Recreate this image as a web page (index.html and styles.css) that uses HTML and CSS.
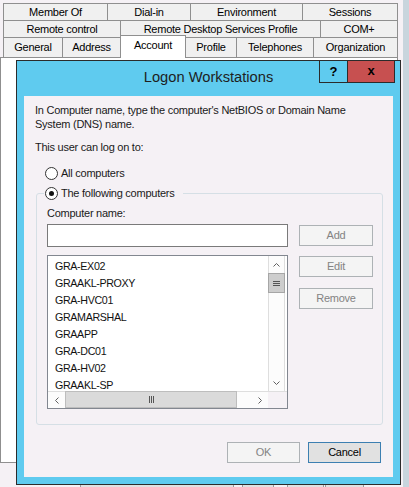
FILE: index.html
```html
<!DOCTYPE html>
<html>
<head>
<meta charset="utf-8">
<link rel="stylesheet" href="styles.css">
</head>
<body>
<div class="desk">
  <div class="parent">
    <div class="tabs">
      <div class="row">
        <span class="tab w105">Member Of</span>
        <span class="tab w84">Dial-in</span>
        <span class="tab w113">Environment</span>
        <span class="tab w96">Sessions</span>
      </div>
      <div class="row">
        <span class="tab w118">Remote control</span>
        <span class="tab w201">Remote Desktop Services Profile</span>
        <span class="tab w78">COM+</span>
      </div>
      <div class="row r3">
        <span class="tab w60">General</span>
        <span class="tab w59">Address</span>
        <span class="tab w66 sel">Account</span>
        <span class="tab w52">Profile</span>
        <span class="tab w78">Telephones</span>
        <span class="tab w85">Organization</span>
      </div>
    </div>
    <div class="panel"></div>
    <div class="pbtns">
      <span class="pb pb1"></span>
      <span class="pb pb2"></span>
      <span class="pb pb3"></span>
      <span class="pb pb4"></span>
    </div>
  </div>

  <div class="dialog">
    <div class="titlebar">
      <span class="title">Logon Workstations</span>
      <span class="tb help">?</span>
      <span class="tb close">x</span>
    </div>
    <div class="client">
      <p class="intro">In Computer name, type the computer's NetBIOS or Domain Name<br>System (DNS) name.</p>
      <p class="lead">This user can log on to:</p>
      <div class="radio first"><span class="rb"></span>All computers</div>
      <fieldset class="group">
        <legend class="radio leg"><span class="rb on"></span>The following computers</legend>
        <div class="lbl">Computer name:</div>
        <div class="grid">
          <div class="input"></div>
          <button class="btn dis add">Add</button>
          <div class="list">
            <div class="items">
              <div>GRA-EX02</div>
              <div>GRAAKL-PROXY</div>
              <div>GRA-HVC01</div>
              <div>GRAMARSHAL</div>
              <div>GRAAPP</div>
              <div>GRA-DC01</div>
              <div>GRA-HV02</div>
              <div>GRAAKL-SP</div>
            </div>
            <div class="vsb">
              <span class="arr va"><svg width="7" height="4" viewBox="0 0 7 4"><polyline points="0.5,3.5 3.5,0.5 6.5,3.5" fill="none" stroke="#606060" stroke-width="1"/></svg></span>
              <span class="vthumb"><svg width="7" height="5" viewBox="0 0 7 5"><path d="M0 0.5H7M0 2.5H7M0 4.5H7" stroke="#555" stroke-width="1"/></svg></span>
              <span class="vtrack"></span>
              <span class="arr va"><svg width="7" height="4" viewBox="0 0 7 4"><polyline points="0.5,0.5 3.5,3.5 6.5,0.5" fill="none" stroke="#606060" stroke-width="1"/></svg></span>
            </div>
            <div class="hsb">
              <span class="arr ha"><svg width="4" height="7" viewBox="0 0 4 7"><polyline points="3.5,0.5 0.5,3.5 3.5,6.5" fill="none" stroke="#606060" stroke-width="1"/></svg></span>
              <span class="hthumb"><svg width="5" height="7" viewBox="0 0 5 7"><path d="M0.5 0V7M2.5 0V7M4.5 0V7" stroke="#555" stroke-width="1"/></svg></span>
              <span class="htrack"></span>
              <span class="arr ha"><svg width="4" height="7" viewBox="0 0 4 7"><polyline points="0.5,0.5 3.5,3.5 0.5,6.5" fill="none" stroke="#606060" stroke-width="1"/></svg></span>
            </div>
            <div class="corner"></div>
          </div>
          <div class="side">
            <button class="btn dis edit">Edit</button>
            <button class="btn dis remove">Remove</button>
          </div>
        </div>
      </fieldset>
      <div class="footer">
        <button class="btn dis ok">OK</button>
        <button class="btn cancel">Cancel</button>
      </div>
    </div>
  </div>
</div>
</body>
</html>
```
FILE: styles.css
```css
html, body {
  margin: 0;
  padding: 0;
}
body {
  width: 409px;
  height: 487px;
  overflow: hidden;
  background: #c8d5dd;
  font-family: "Liberation Sans", Arial, sans-serif;
  font-size: 11px;
  letter-spacing: -0.25px;
  color: #000;
}
.desk {
  position: relative;
  width: 409px;
  height: 487px;
}
.parent {
  width: 403px;
  height: 487px;
  background: #f5f1f5;
  overflow: hidden;
}
.tabs {
  padding: 3px 0 0 3px;
}
.row {
  display: flex;
  height: 18px;
}
.row + .row {
  margin-top: -1px;
}
.row.r3 {
  height: 20px;
}
.tab {
  box-sizing: border-box;
  flex: none;
  border: 1px solid #8f8f8f;
  background: #f0f0f0;
  display: flex;
  align-items: center;
  justify-content: center;
  line-height: 13px;
  white-space: nowrap;
}
.tab + .tab {
  margin-left: -1px;
}
.r3 .tab {
  border-bottom: none;
}
.tab.sel {
  background: #fff;
  height: 23px;
  margin-top: -2px;
  position: relative;
  z-index: 1;
  align-items: flex-start;
  padding-top: 3px;
}
.w52 { width: 52px; }
.w59 { width: 59px; }
.w60 { width: 60px; }
.w66 { width: 66px; }
.w78 { width: 78px; }
.w84 { width: 84px; }
.w85 { width: 85px; }
.w96 { width: 96px; }
.w105 { width: 105px; }
.w113 { width: 113px; }
.w118 { width: 118px; }
.w201 { width: 201px; }

.panel {
  box-sizing: border-box;
  width: 398px;
  height: 406px;
  border: 1px solid #8f8f8f;
  background: #fff;
}
.pbtns {
  display: flex;
  margin-top: 21px;
  padding-left: 80px;
}
.pb {
  box-sizing: border-box;
  height: 10px;
  border: 1px solid #9a9a9a;
  background: #e1e1e1;
}
.pb1 { width: 154px; }
.pb2 { width: 32px; margin-left: 8px; }
.pb3 { width: 37px; margin-left: 13px; }
.pb4 { width: 39px; margin-left: 1px; }

/* dialog */
.dialog {
  position: absolute;
  left: 16px;
  top: 60px;
  width: 385px;
  height: 425px;
  box-sizing: border-box;
  border: 1px solid #2b2b2b;
  background: #5fcbef;
  padding: 0 7px 7px;
  display: flex;
  flex-direction: column;
}
.titlebar {
  height: 35px;
  flex: none;
  position: relative;
  text-align: center;
}
.title {
  font-size: 14.7px;
  line-height: 32px;
  letter-spacing: 0;
  color: #1e1e1e;
}
.tb {
  position: absolute;
  top: -1px;
  height: 23px;
  box-sizing: border-box;
  border: 1px solid #2b2b2b;
  font-weight: bold;
  font-size: 13px;
  letter-spacing: 0;
  display: flex;
  align-items: center;
  justify-content: center;
  color: #000;
}
.help {
  left: 295px;
  width: 29px;
  background: #5fcbef;
}
.close {
  left: 323px;
  width: 48px;
  background: #c75050;
  padding-bottom: 2px;
}
.client {
  flex: 1;
  background: #f5f1f5;
  padding: 7px 9px 0 11px;
  color: #1a1a1a;
}
.intro, .lead {
  margin: 0;
  line-height: 14px;
}
.lead {
  margin-top: 9px;
}
.radio {
  display: flex;
  align-items: center;
  height: 20px;
  white-space: nowrap;
}
.radio.first {
  margin-top: 9px;
  margin-left: 10px;
}
.rb {
  flex: none;
  box-sizing: border-box;
  width: 13px;
  height: 13px;
  border: 1px solid #333;
  border-radius: 50%;
  background: #fff;
  margin-right: 3px;
  position: relative;
}
.rb.on::after {
  content: "";
  position: absolute;
  left: 3px;
  top: 3px;
  width: 5px;
  height: 5px;
  border-radius: 50%;
  background: #111;
}
.group {
  box-sizing: border-box;
  width: 347px;
  min-width: 0;
  margin: 0 0 0 1px;
  padding: 0 8px 15px 10px;
  border: 1px solid #d5dfe5;
  border-radius: 3px;
}
.leg {
  margin-left: -3px;
  padding: 0 9px 0 1px;
}
.lbl {
  margin-top: 3px;
  line-height: 14px;
}
.grid {
  display: grid;
  grid-template-columns: 241px 74px;
  column-gap: 11px;
  row-gap: 8px;
  margin-top: 4px;
}
.input {
  box-sizing: border-box;
  height: 23px;
  border: 1px solid #7a7a7a;
  background: #fff;
}
.btn {
  box-sizing: border-box;
  width: 74px;
  height: 21px;
  padding: 0;
  border: 1px solid #adb2b5;
  background: #f4f4f4;
  color: #838383;
  font: inherit;
  letter-spacing: inherit;
  line-height: 13px;
}
.add {
  align-self: center;
}
.side {
  display: flex;
  flex-direction: column;
}
.edit {
  margin-top: 1px;
}
.remove {
  margin-top: 11px;
}
.list {
  box-sizing: border-box;
  height: 154px;
  border: 1px solid #828790;
  background: #fff;
  display: grid;
  grid-template-columns: 220px 19px;
  grid-template-rows: 135px 17px;
}
.items {
  overflow: hidden;
  padding: 2px 0 0 7px;
  font-size: 10.7px;
  letter-spacing: -0.35px;
  line-height: 17px;
  color: #111;
}
.vsb {
  display: flex;
  flex-direction: column;
  margin-right: 2px;
  border-left: 1px solid #dedede;
  border-right: 1px solid #dedede;
  background: #fcfcfc;
}
.arr {
  display: flex;
  align-items: center;
  justify-content: center;
  flex: none;
}
.va {
  height: 17px;
}
.vthumb {
  flex: none;
  height: 20px;
  box-sizing: border-box;
  margin: 0 -1px;
  border: 1px solid #a6a6a6;
  background: #cdcdcd;
  display: flex;
  align-items: center;
  justify-content: center;
}
.vtrack, .htrack {
  flex: 1;
}
.hsb {
  display: flex;
  border-top: 1px solid #dedede;
  background: #fcfcfc;
}
.ha {
  width: 17px;
}
.hthumb {
  flex: none;
  width: 172px;
  box-sizing: border-box;
  margin: -1px 0 0;
  border: 1px solid #bdbdbd;
  background: #dadada;
  display: flex;
  align-items: center;
  justify-content: center;
}
.corner {
  background: #f5f1f5;
  border-top: 1px solid #dedede;
}
.footer {
  display: flex;
  justify-content: flex-end;
  gap: 8px;
  margin-top: 17px;
  padding-right: 3px;
}
.ok, .cancel {
  width: 73px;
}
.cancel {
  background: #e1e1e1;
  border-color: #3c7fb1;
  color: #000;
}
```
